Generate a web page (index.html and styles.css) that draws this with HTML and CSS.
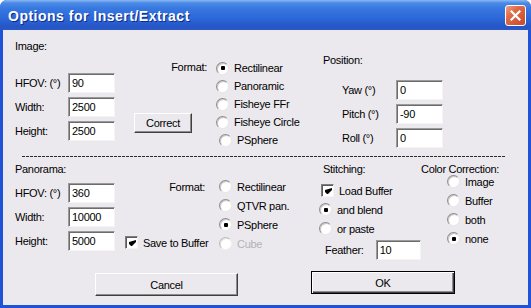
FILE: index.html
```html
<!DOCTYPE html>
<html lang="en">
<head>
    <meta charset="UTF-8">
    <title>Options for Insert/Extract</title>
    <link rel="stylesheet" href="styles.css">
</head>
<body>
    <div class="window">
        <div class="titlebar">
            <span class="title">Options for Insert/Extract</span>
            <span class="close">
                <svg width="11" height="11" viewBox="0 0 11 11"><path d="M1.5 1.5 L9.5 9.5 M9.5 1.5 L1.5 9.5" stroke="#fff" stroke-width="2.2" stroke-linecap="square"/></svg>
            </span>
        </div>

        <div class="dialog">
            <!-- Source image -->
            <div class="section top">
                <div class="col-size">
                    <div class="caption">Image:</div>
                    <div class="field"><span class="lbl">HFOV: (°)</span><span class="edit">90</span></div>
                    <div class="field"><span class="lbl">Width:</span><span class="edit">2500</span></div>
                    <div class="field"><span class="lbl">Height:</span><span class="edit">2500</span></div>
                </div>
                <div class="format-side">
                    <div class="caption format-lbl">Format:</div>
                    <span class="button correct">Correct</span>
                </div>
                <div class="radios">
                    <div class="radio checked"><i></i>Rectilinear</div>
                    <div class="radio"><i></i>Panoramic</div>
                    <div class="radio"><i></i>Fisheye FFr</div>
                    <div class="radio"><i></i>Fisheye Circle</div>
                    <div class="radio shifted"><i></i>PSphere</div>
                </div>
                <div class="col-position">
                    <div class="caption">Position:</div>
                    <div class="field"><span class="lbl">Yaw (°)</span><span class="edit">0</span></div>
                    <div class="field"><span class="lbl">Pitch (°)</span><span class="edit">-90</span></div>
                    <div class="field"><span class="lbl">Roll (°)</span><span class="edit">0</span></div>
                </div>
            </div>

            <div class="divider"></div>

            <!-- Panorama -->
            <div class="section bottom">
                <div class="col-size">
                    <div class="caption">Panorama:</div>
                    <div class="field"><span class="lbl">HFOV: (°)</span><span class="edit">360</span></div>
                    <div class="field"><span class="lbl">Width:</span><span class="edit">10000</span></div>
                    <div class="field"><span class="lbl">Height:</span><span class="edit">5000</span></div>
                </div>
                <div class="format-side">
                    <div class="caption format-lbl">Format:</div>
                    <div class="check save"><b><svg width="9" height="9" viewBox="0 0 9 9"><path d="M1 3v2l2 2h1l4-4V1z" fill="#000"/></svg></b>Save to Buffer</div>
                </div>
                <div class="radios">
                    <div class="radio"><i></i>Rectilinear</div>
                    <div class="radio"><i></i>QTVR pan.</div>
                    <div class="radio checked"><i></i>PSphere</div>
                    <div class="radio disabled"><i></i>Cube</div>
                </div>
                <div class="col-stitch">
                    <div class="caption">Stitching:</div>
                    <div class="check load"><b><svg width="9" height="9" viewBox="0 0 9 9"><path d="M1 3v2l2 2h1l4-4V1z" fill="#000"/></svg></b>Load Buffer</div>
                    <div class="radio checked"><i></i>and blend</div>
                    <div class="radio"><i></i>or paste</div>
                    <div class="field feather"><span class="lbl">Feather:</span><span class="edit">10</span></div>
                </div>
                <div class="col-color">
                    <div class="caption">Color Correction:</div>
                    <div class="radio"><i></i>Image</div>
                    <div class="radio"><i></i>Buffer</div>
                    <div class="radio"><i></i>both</div>
                    <div class="radio checked"><i></i>none</div>
                </div>
            </div>

            <div class="actions">
                <span class="button cancel">Cancel</span>
                <span class="button ok">OK</span>
            </div>
        </div>
    </div>
</body>
</html>
```

FILE: styles.css
```css
/* Page */
html, body {
    margin: 0;
    background: #ffffff;
}

body {
    font-family: "Liberation Sans", Arial, sans-serif;
    font-size: 11px;
    letter-spacing: -0.3px;
    color: #000;
}

/* Window frame */
.window {
    width: 531px;
    height: 308px;
    box-sizing: border-box;
    background: #1f52d6;
    border-radius: 7px 7px 0 0;
    overflow: hidden;
    display: flex;
    flex-direction: column;
}

.titlebar {
    height: 30px;
    display: flex;
    align-items: center;
    justify-content: space-between;
    padding: 0 5px 0 8px;
    background: linear-gradient(#8cb8f2 0, #4a8ae6 3px, #3677e0 9px, #2d68d8 18px, #2556c8 26px, #2a58c4 30px);
}

.title {
    font-family: "Liberation Sans", Arial, sans-serif;
    font-weight: bold;
    font-size: 14px;
    letter-spacing: 0.5px;
    color: #fff;
    text-shadow: 1px 1px 0 #0c2c8a;
    padding-top: 1px;
}

.close {
    width: 21px;
    height: 21px;
    box-sizing: border-box;
    border: 1px solid #fff;
    border-radius: 3px;
    background: linear-gradient(135deg, #f0a080 0, #e06a48 35%, #c84a2a 100%);
    display: flex;
    align-items: center;
    justify-content: center;
}

/* Dialog body */
.dialog {
    flex: 1;
    margin: 0 3px 3px;
    background: #ebe9ed;
}

.section {
    display: flex;
    padding-left: 12px;
}

.section.top {
    height: 126px;
}

.section.bottom {
    height: 108px;
}

.caption {
    height: 13px;
    line-height: 13px;
    white-space: nowrap;
}

/* Label + edit box rows */
.field {
    display: flex;
    align-items: center;
    height: 20px;
}

.lbl {
    white-space: nowrap;
}

.edit {
    width: 47px;
    height: 20px;
    box-sizing: border-box;
    border: 1px solid;
    border-color: #9a9a9a #f4f4f4 #f4f4f4 #9a9a9a;
    box-shadow: inset 1px 1px 0 #6c6c6c;
    background: #fff;
    padding: 3px 0 0 3px;
    line-height: 13px;
}

.col-size {
    width: 101px;
    display: flex;
    flex-direction: column;
}

.col-size .lbl {
    width: 53px;
}

.top .col-size { padding-top: 10px; }
.top .col-size .field:nth-child(2) { margin-top: 20px; }
.top .col-size .field + .field { margin-top: 4px; }

.bottom .col-size { padding-top: 6px; }
.bottom .col-size .field:nth-child(2) { margin-top: 7px; }
.bottom .col-size .field + .field { margin-top: 4px; }

/* Format label + buttons beside the radios */
.format-side {
    display: flex;
    flex-direction: column;
}

.format-lbl {
    text-align: right;
}

.top .format-side {
    width: 96px;
    padding-top: 31px;
}

.top .format-lbl {
    padding-right: 5px;
}

.bottom .format-side {
    width: 100px;
    padding-top: 24px;
}

.bottom .format-lbl {
    padding-right: 11px;
}

/* Radio buttons */
.radios {
    width: 107px;
    display: flex;
    flex-direction: column;
}

.top .radios {
    padding: 29px 0 0 4px;
}

.bottom .radios {
    width: 104px;
    padding: 20px 0 0 3px;
}

.radio {
    display: flex;
    align-items: center;
    height: 18px;
    white-space: nowrap;
}

.bottom .radio {
    height: 19px;
}

.radio i {
    width: 13px;
    height: 13px;
    box-sizing: border-box;
    border-radius: 50%;
    border: 1px solid;
    border-color: #8e8e8e #e6e6e6 #e6e6e6 #8e8e8e;
    box-shadow: inset 1px 1px 0 #c9c9c9;
    background: #fff;
    margin-right: 5px;
    display: flex;
    align-items: center;
    justify-content: center;
    flex: none;
}

.radio.checked i::after {
    content: "";
    width: 4px;
    height: 4px;
    border-radius: 1px;
    background: #000;
}

.radio.shifted {
    padding-left: 3px;
}

.radio.disabled {
    color: #b4b2b6;
}

.radio.disabled i {
    border-color: #bdbdbd #f0f0f0 #f0f0f0 #bdbdbd;
    box-shadow: inset 1px 1px 0 #e0e0e0;
}

/* Check boxes */
.check {
    display: flex;
    align-items: center;
    white-space: nowrap;
}

.check b {
    width: 13px;
    height: 13px;
    box-sizing: border-box;
    border: 1px solid;
    border-color: #7e7e7e #f4f4f4 #f4f4f4 #7e7e7e;
    box-shadow: inset 1px 1px 0 #5a5a5a;
    background: #fff;
    margin-right: 5px;
    display: flex;
    align-items: center;
    justify-content: center;
    padding: 1px 0 0 1px;
}

.check.save {
    margin: 41px 0 0 9px;
    height: 15px;
}

/* Position column */
.col-position {
    padding: 24px 0 0 0;
    display: flex;
    flex-direction: column;
}

.col-position .lbl {
    width: 54px;
    padding-left: 19px;
}

.col-position .field:nth-child(2) { margin-top: 13px; }
.col-position .field + .field { margin-top: 4px; }

/* Stitching column */
.col-stitch {
    width: 98px;
    padding-top: 6px;
    display: flex;
    flex-direction: column;
}

.col-stitch .check.load {
    margin: 7px 0 0 -2px;
    height: 15px;
}

.col-stitch .radio {
    margin-left: -4px;
}

.col-stitch .radio:nth-child(3) {
    margin-top: 2px;
}

.col-stitch .feather {
    margin: 2px 0 0 2px;
}

.feather .lbl {
    width: 53px;
}

/* Colour correction column */
.col-color {
    padding-top: 6px;
    display: flex;
    flex-direction: column;
}

.col-color .radio {
    margin-left: 26px;
}

.col-color .radio:nth-child(2) {
    margin-top: -4px;
}

/* Dashed divider */
.divider {
    height: 1px;
    margin: 0 23px 0 19px;
    background: repeating-linear-gradient(to right, #2a2a2a 0 3px, transparent 3px 4px);
}

/* Push buttons */
.actions {
    display: flex;
    padding-left: 92px;
    align-items: flex-start;
}

.button {
    display: flex;
    align-items: center;
    justify-content: center;
    box-sizing: border-box;
    border: 1px solid;
    border-color: #fff #3f3f3f #3f3f3f #fff;
    box-shadow: inset -1px -1px 0 #8c8c8c;
    background: #ebe9ed;
    white-space: nowrap;
}

.correct {
    width: 58px;
    height: 20px;
    margin: 39px 0 0 18px;
}

.cancel {
    width: 143px;
    height: 23px;
    margin-top: 8px;
}

.ok {
    width: 144px;
    height: 23px;
    margin: 6px 0 0 73px;
    border-color: #000;
    box-shadow: inset 1px 1px 0 #fff, inset -1px -1px 0 #3f3f3f, inset -2px -2px 0 #8c8c8c;
}
```
